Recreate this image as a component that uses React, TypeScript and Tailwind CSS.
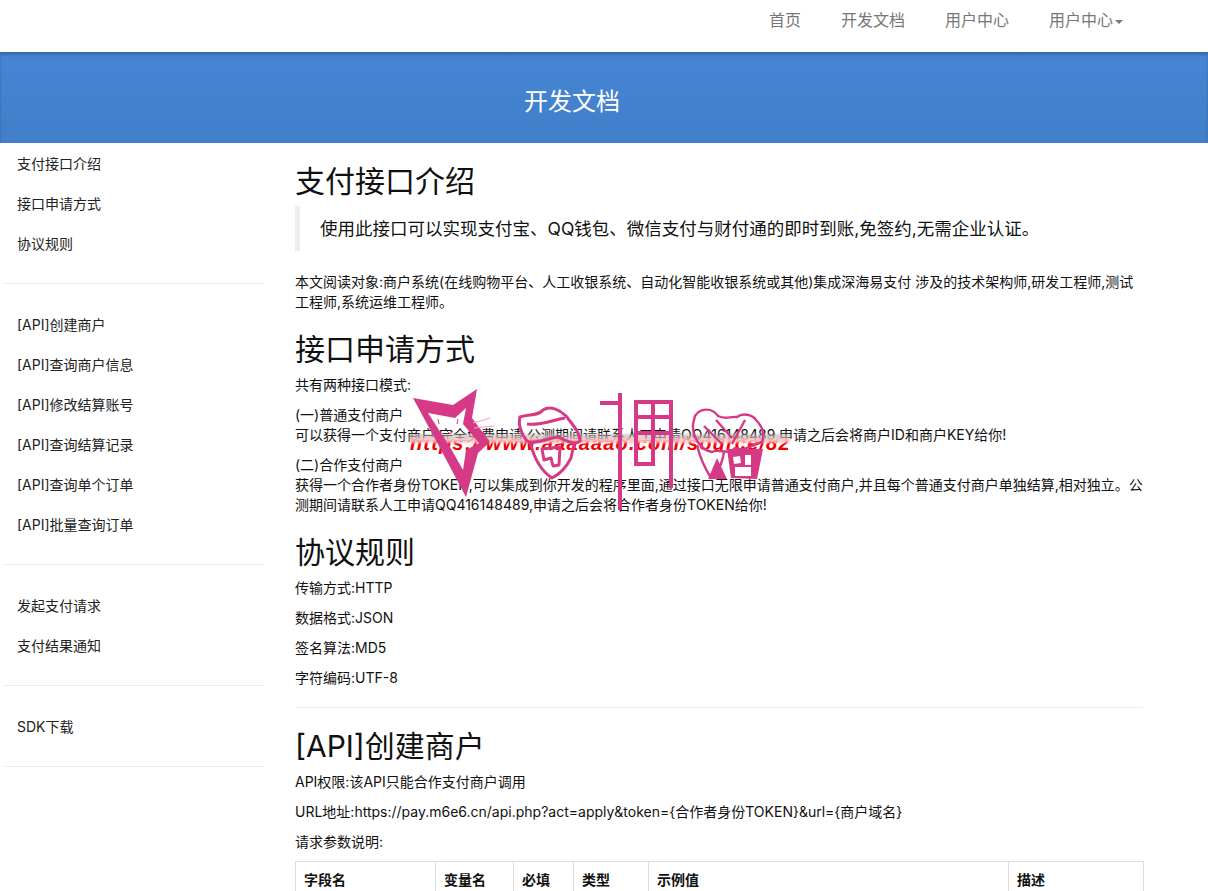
const group1 = ['支付接口介绍', '接口申请方式', '协议规则'];
const group2 = ['[API]创建商户', '[API]查询商户信息', '[API]修改结算账号', '[API]查询结算记录', '[API]查询单个订单', '[API]批量查询订单'];
const group3 = ['发起支付请求', '支付结果通知'];
const group4 = ['SDK下载'];

const navItems = ['首页', '开发文档', '用户中心'];

const columns = [
  { label: '字段名', width: 'w-[140px]' },
  { label: '变量名', width: 'w-[78px]' },
  { label: '必填', width: 'w-[60px]' },
  { label: '类型', width: 'w-[75px]' },
  { label: '示例值', width: 'w-[360px]' },
  { label: '描述', width: 'w-[135px]' },
];

function SideGroup({ items }: { items: string[] }) {
  return (
    <div className="pb-[19px] mb-[21px] border-b border-[#eeeeee]">
      {items.map((item) => (
        <a key={item} className="flex items-center h-10 pl-[14px] text-[#222]">
          {item}
        </a>
      ))}
    </div>
  );
}

// site watermark drawn over the article
function Watermark() {
  return (
    <div className="absolute left-[400px] top-[385px] w-[410px] h-[125px] pointer-events-none">
      <div className="absolute left-[10px] top-[55px] w-[378px] h-[16px] overflow-hidden">
        <div className="absolute left-0 top-[-8px] font-['Liberation_Sans',sans-serif] font-bold italic text-[20px] leading-[22px] tracking-[1.15px] text-[#f00000] whitespace-nowrap">
          https://www.aaaaaao.com/source/8288
        </div>
      </div>
      <div className="absolute left-[10px] top-[49px] w-[380px] h-[6px] bg-[#bfb0b0]/60 blur-[1px]" />
      <div className="absolute left-[10px] top-[53px] w-[380px] h-[5px] bg-[#ffc4c4]/85 blur-[1px]" />
      <svg width="410" height="125" viewBox="400 385 410 125" className="absolute left-0 top-0">
        {/* cat */}
        <path
          fillRule="evenodd"
          fill="#d63a87"
          d="M413 398 L453 405 L477 389 L472 418 L490 442 L478 453 L466 497 L440 448 Z M428 413 L450 447 L463 470 L466 450 L479 443 L463 424 L466 408 L455 418 Z"
        />
        <g stroke="#d63a87" strokeWidth="1" fill="none">
          <path d="M438 419 L439 424 M458 419 L457 424 M447 431 L450 434 L453 431" />
          <path d="M473 423 L490 418 M474 428 L494 426" stroke="#f0a0c8" />
        </g>
        {/* first character */}
        <g stroke="#d63a87" strokeWidth="3" fill="none" strokeLinejoin="round">
          <path d="M520 417 C530 414 538 416 543 410 C550 405 560 410 566 416 C572 424 580 432 580 441 C575 446 565 440 558 437 C548 438 535 445 527 441 C521 434 518 424 520 417 Z" />
          <path d="M530 441 C533 455 540 470 552 478 C558 475 566 468 571 458 L574 444" />
          <path d="M542 449 L560 447 L559 465 L553 466 L551 458 L544 460 Z" />
          <path d="M527 424 C540 426 552 420 565 418" />
        </g>
        {/* second character */}
        <g fill="#d63a87">
          <rect x="600" y="401" width="19" height="4" />
          <rect x="618" y="393" width="4" height="117" />
          <rect x="634" y="400" width="39" height="4" />
          <rect x="634" y="400" width="4" height="66" />
          <rect x="669" y="400" width="4" height="88" />
          <rect x="636" y="415" width="35" height="4" />
          <rect x="636" y="431" width="35" height="4" />
          <rect x="651" y="400" width="4" height="65" />
          <rect x="636" y="462" width="19" height="4" />
        </g>
        {/* third character */}
        <g stroke="#d63a87" strokeWidth="2.4" fill="none" strokeLinejoin="round">
          <path d="M695 416 C700 408 712 407 718 416 C726 420 730 416 737 417 C742 413 752 414 756 420 C762 426 765 434 762 442 C750 446 742 452 735 448 C728 456 720 448 712 452 C700 450 692 436 693 424 Z" />
          <path d="M704 426 L722 444 M716 420 L732 438 M745 420 L732 444" />
          <path d="M697 445 C700 458 706 470 711 478 C717 474 722 464 724 452" />
        </g>
        <path d="M717 458 L727 479 L708 479 Z" fill="#d63a87" />
        <path
          fillRule="evenodd"
          fill="#d63a87"
          d="M727 449 L763 449 L757 479 L731 478 Z M733 457 L740 456 L741 463 L734 464 Z M745 455 L751 455 L751 465 L745 465 Z M735 467 L751 467 L751 476 L735 476 Z"
        />
      </svg>
    </div>
  );
}

export default function App() {
  return (
    <div className="relative h-[891px] overflow-hidden bg-white font-['Inter','Noto_Sans_CJK_SC',sans-serif] text-[14px] leading-[20px] text-[#111]">
      {/* Top nav */}
      <nav className="flex justify-end h-[52px] pr-[85px]">
        {navItems.map((item) => (
          <a key={item} className="px-5 pt-[10px] text-[16px] leading-[20px] text-[#777777]">
            {item}
          </a>
        ))}
        <a className="flex items-start pl-5 pt-[10px] text-[16px] leading-[20px] text-[#777777]">
          用户中心
          <span className="ml-[2px] mt-[10px] border-x-[4px] border-t-[4px] border-x-transparent border-t-[#777777]" />
        </a>
      </nav>

      {/* Blue header */}
      <header className="flex items-center justify-center h-[91px] pr-[64px] pt-[8px] bg-gradient-to-b from-[#4585d4] to-[#417fc9] shadow-[inset_0_3px_3px_rgba(0,0,0,0.2)] text-[24px] text-white">
        开发文档
      </header>

      <div className="flex">
        {/* Sidebar */}
        <aside className="ml-[3px] w-[262px] pt-px shrink-0">
          <SideGroup items={group1} />
          <SideGroup items={group2} />
          <SideGroup items={group3} />
          <SideGroup items={group4} />
        </aside>

        {/* Article */}
        <main className="ml-[30px] w-[848px] pt-[22px]">
          <h1 className="text-[30px] leading-[33px] mb-2">支付接口介绍</h1>
          <blockquote className="border-l-[5px] border-[#eeeeee] px-5 py-[10px] mb-[21px] text-[17.5px] leading-[25px]">
            使用此接口可以实现支付宝、QQ钱包、微信支付与财付通的即时到账,免签约,无需企业认证。
          </blockquote>
          <p>本文阅读对象:商户系统(在线购物平台、人工收银系统、自动化智能收银系统或其他)集成深海易支付 涉及的技术架构师,研发工程师,测试工程师,系统运维工程师。</p>

          <h2 className="text-[30px] leading-[33px] mt-[21px] mb-[9px]">接口申请方式</h2>
          <p className="mb-[10px]">共有两种接口模式:</p>
          <p className="mb-[10px]">
            (一)普通支付商户
            <br />
            可以获得一个支付商户,完全免费申请,公测期间请联系人工申请QQ416148489,申请之后会将商户ID和商户KEY给你!
          </p>
          <p>
            (二)合作支付商户
            <br />
            获得一个合作者身份TOKEN,可以集成到你开发的程序里面,通过接口无限申请普通支付商户,并且每个普通支付商户单独结算,相对独立。公测期间请联系人工申请QQ416148489,申请之后会将合作者身份TOKEN给你!
          </p>

          <h2 className="text-[30px] leading-[33px] mt-[21px] mb-[9px]">协议规则</h2>
          <p className="mb-[10px]">传输方式:HTTP</p>
          <p className="mb-[10px]">数据格式:JSON</p>
          <p className="mb-[10px]">签名算法:MD5</p>
          <p className="mb-[19px]">字符编码:UTF-8</p>
          <hr className="border-[#eeeeee]" />

          <h2 className="text-[30px] leading-[33px] mt-[22px] mb-[9px]">[API]创建商户</h2>
          <p className="mb-[10px]">API权限:该API只能合作支付商户调用</p>
          <p className="mb-[10px]">URL地址:https://pay.m6e6.cn/api.php?act=apply&amp;token={'{'}合作者身份TOKEN{'}'}&amp;url={'{'}商户域名{'}'}</p>
          <p className="mb-[9px]">请求参数说明:</p>
          <table className="w-full table-fixed border-collapse border border-[#dddddd]">
            <thead>
              <tr>
                {columns.map((col) => (
                  <th key={col.label} className={`${col.width} border border-[#dddddd] p-2 text-left font-bold`}>
                    {col.label}
                  </th>
                ))}
              </tr>
            </thead>
          </table>
        </main>
      </div>

      <Watermark />
    </div>
  );
}
